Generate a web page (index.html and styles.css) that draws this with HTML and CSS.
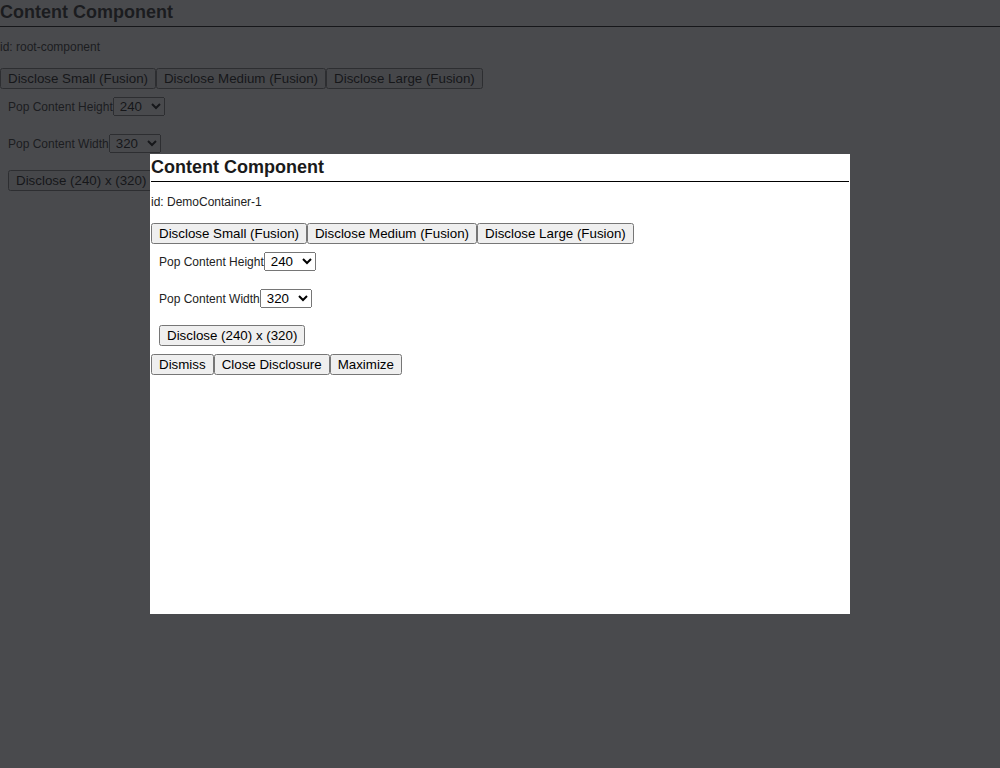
FILE: index.html
```html
<!DOCTYPE html>
<html>
<head>
<meta charset="utf-8">
<link rel="stylesheet" href="styles.css">
</head>
<body>
<div class="component">
  <div class="title">Content Component</div>
  <div class="cid">id: root-component</div>
  <div class="btnrow">
    <button>Disclose Small (Fusion)</button><button>Disclose Medium (Fusion)</button><button>Disclose Large (Fusion)</button>
  </div>
  <div class="controls">
    <div class="row"><label class="lbl">Pop Content Height</label><select><option>240</option><option>320</option><option>480</option></select></div>
    <div class="row"><label class="lbl">Pop Content Width</label><select><option>320</option><option>480</option><option>640</option></select></div>
    <div class="row"><button>Disclose (240) x (320)</button></div>
  </div>
</div>

<div class="overlay"></div>

<div class="modal">
  <div class="component">
    <div class="title">Content Component</div>
    <div class="cid">id: DemoContainer-1</div>
    <div class="btnrow">
      <button>Disclose Small (Fusion)</button><button>Disclose Medium (Fusion)</button><button>Disclose Large (Fusion)</button>
    </div>
    <div class="controls">
      <div class="row"><label class="lbl">Pop Content Height</label><select><option>240</option><option>320</option><option>480</option></select></div>
      <div class="row"><label class="lbl">Pop Content Width</label><select><option>320</option><option>480</option><option>640</option></select></div>
      <div class="row"><button>Disclose (240) x (320)</button></div>
    </div>
  </div>
  <div class="btnrow actions">
    <button>Dismiss</button><button>Close Disclosure</button><button>Maximize</button>
  </div>
</div>
</body>
</html>
```

FILE: styles.css
```css
html, body {
  margin: 0;
  padding: 0;
  background: #ffffff;
  color: #000000;
  font-family: "Liberation Sans", Arial, sans-serif;
}

button, select {
  font-family: "Liberation Sans", Arial, sans-serif;
  font-size: 13.333px;
  margin: 0;
}

select {
  box-sizing: border-box;
  width: 52px;
  height: 19px;
  padding: 0 0 0 2px;
}

.title {
  font-size: 18px;
  font-weight: 700;
  line-height: 24px;
  padding-bottom: 2px;
  border-bottom: 1px solid #000000;
  color: #1a1a1a;
}

.cid {
  font-size: 12px;
  line-height: 14px;
  margin-top: 13px;
  margin-bottom: 14px;
  color: #222222;
}

.btnrow {
  display: flex;
}

.controls {
  padding-left: 8px;
  margin-top: 8px;
  display: flex;
  flex-direction: column;
}

.row {
  display: flex;
  align-items: center;
  height: 19px;
  margin-bottom: 18px;
}

.row:nth-child(2) {
  margin-bottom: 17px;
}

.row:last-child {
  height: 21px;
  margin-bottom: 0;
}

.lbl {
  font-size: 12px;
  color: #222222;
}

.overlay {
  position: fixed;
  inset: 0;
  background: rgba(28, 29, 33, 0.8);
}

.modal {
  position: fixed;
  left: 150px;
  top: 154px;
  width: 698px;
  height: 458px;
  border: 1px solid #ffffff;
  background: #ffffff;
}

.actions {
  margin-top: 8px;
}
```
